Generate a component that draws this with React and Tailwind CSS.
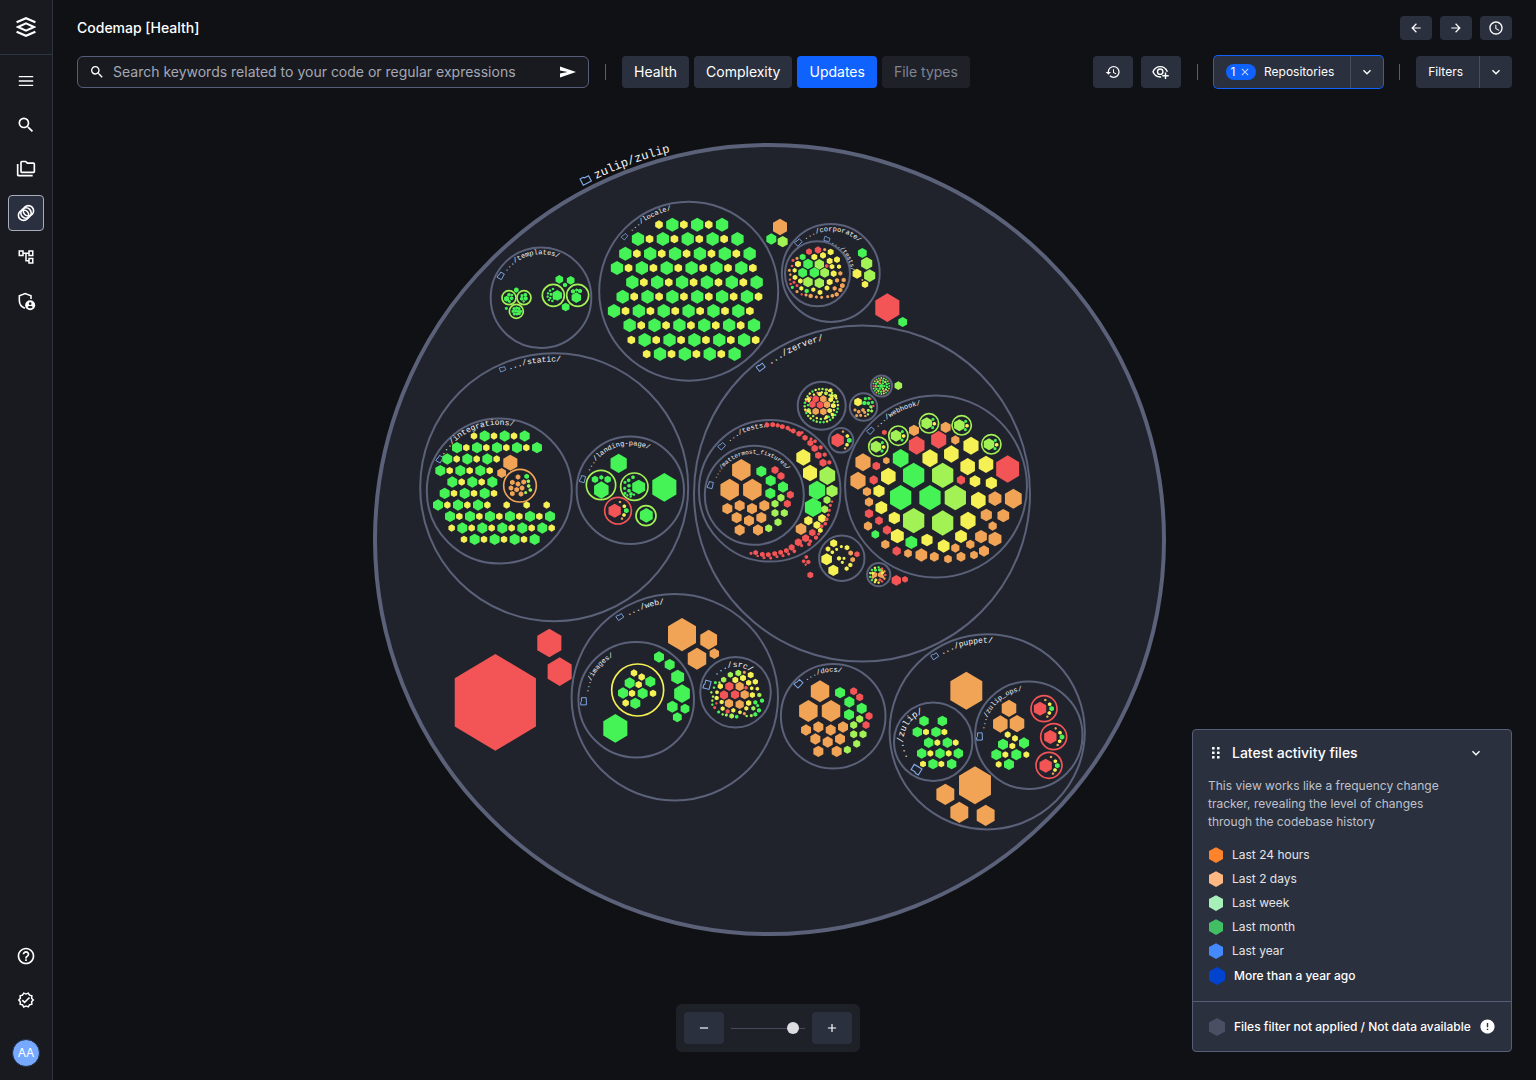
import React from 'react';
import {
  MdSearch, MdOutlineFolderCopy, MdOutlineAccountTree,
  MdHelpOutline, MdOutlineVerified, MdHistory, MdSchedule, MdError, MdArrowBack, MdArrowForward,
  MdKeyboardArrowDown, MdAdd, MdRemove, MdClose,
} from 'react-icons/md';

const COLORS = {
  g: '#45f357',
  y: '#f5f054',
  l: '#a3f255',
  o: '#f2a456',
  r: '#f35556',
  c: '#5a6179',
};

/* ---------- map geometry: clusters hold their cells at three units per pixel ---------- */

function parse(color, text) {
  return text.split(',').map((cell) => {
    const [x, y, r] = cell.trim().split(' ').map(Number);
    return { color, x, y, r };
  });
}

function cells(groups) {
  return Object.entries(groups).flatMap(([color, text]) => parse(color, text));
}

function rows(list, toYellow, toGreen, big, small) {
  return list.flatMap(([y, first, x0, count]) => {
    const out = [];
    let x = x0;
    let color = first;
    for (let i = 0; i < count; i += 1) {
      out.push({ color, x, y, r: color === 'g' ? big : small });
      x += color === 'g' ? toYellow : toGreen;
      color = color === 'g' ? 'y' : 'g';
    }
    return out;
  });
}

function ring(cx, cy, radius, size, pattern, from = 0, sweep = 360) {
  return pattern.split('').map((color, i) => {
    const a = ((from + (sweep * i) / pattern.length) * Math.PI) / 180;
    return { color, x: cx + radius * Math.cos(a), y: cy + radius * Math.sin(a), r: size };
  });
}

function redBadge(cx, cy) {
  return [
    { color: 'r', x: cx - 10, y: cy, r: 21 },
    { color: 'o', x: cx + 6, y: cy - 26, r: 4 },
    { color: 'y', x: cx + 19, y: cy - 13, r: 6 },
    { color: 'g', x: cx + 25, y: cy, r: 8 },
    { color: 'y', x: cx + 18, y: cy + 13, r: 6 },
    { color: 'o', x: cx + 12, y: cy + 24, r: 4 },
  ];
}

function limeBadge(cx, cy) {
  return [
    { color: 'l', x: cx - 7, y: cy, r: 18 },
    { color: 'g', x: cx + 12, y: cy - 12, r: 5 },
    { color: 'y', x: cx + 16, y: cy + 1, r: 6 },
    { color: 'g', x: cx + 11, y: cy + 13, r: 5 },
  ];
}

const LOCALE_ROWS = [
  [254, 'y', 537, 6], [297, 'g', 474, 9], [341, 'g', 436, 11], [384, 'g', 411, 12], [427, 'g', 457, 11],
  [470, 'g', 428, 12], [513, 'g', 402, 12], [556, 'g', 449, 11], [600, 'y', 454, 11], [642, 'y', 500, 8],
];

const INTEGRATION_ROWS = [
  [273, 'y', 192, 6], [308, 'g', 141, 9], [342, 'g', 112, 6], [377, 'g', 91, 6], [411, 'g', 127, 5],
  [445, 'g', 104, 6], [480, 'g', 84, 6], [514, 'g', 120, 11], [549, 'y', 125, 11], [583, 'y', 162, 8],
];

const FIXTURES = cells({
  o: '154 210 33,119 269 33,187 269 33,112 326 17,149 317 17,186 326 17,223 317 17,140 353 17,177 362 17,214 353 17,149 390 17,204 390 17',
  g: '214 214 17,242 242 17,241 280 17,279 261 17',
  l: '273 293 12,255 311 12,255 339 12,283 339 12,264 367 12,236 385 12',
  r: '255 210 12,273 228 12,301 284 12,292 311 12',
});

const CLUSTERS = [
  {
    at: [480, 140],
    rings: [['l', 87, 473, 21], ['l', 132, 473, 21], ['l', 109, 514, 21], ['l', 220, 466, 33], ['l', 293, 466, 33]],
    cells: [
      ...rows(LOCALE_ROWS, 34.6, 40, 21, 13),
      ...cells({
        g: '238 418 13,272 421 13,255 435 7,257 501 13,109 450 8,79 505 5,80 476 9,87 464 6,95 475 6,88 484 5,96 465 4,126 467 5,136 464 6,125 476 6,137 475 7,131 484 4,232 466 16,219 447 4,210 452 4,204 460 4,213 463 5,203 470 4,211 474 4,207 480 4,217 483 4,222 476 4,289 473 16,279 454 7,300 453 7,290 450 5,102 506 5,110 504 5,117 506 5,99 514 5,107 513 5,115 514 5,122 514 5,103 522 5,111 522 5,118 521 5',
      }),
    ],
  },
  {
    at: [770, 210],
    rings: [],
    cells: [
      ...cells({
        g: '114 162 16,98 188 15,133 188 16,98 141 10,110 243 7,67 232 5,277 129 15,4 87 17,398 336 15,286 566 5,297 565 5,283 579 7,295 580 6,307 577 5,302 590 5',
        l: '148 163 16,164 188 15,114 216 16,148 219 16,290 160 19,299 197 19,38 95 17,385 527 13,295 601 5,305 603 5,294 613 4,304 592 4',
        r: '117 125 10,144 120 11,69 151 5,66 168 4,72 217 5,60 209 4,170 168 6,62 222 4,95 253 4,81 227 5,352 293 43,302 567 3,310 588 4,137 567 11,127 583 11,150 585 11,109 573 4,109 603 5',
        y: '133 141 10,159 136 10,182 126 10,179 153 10,201 149 10,84 162 10,191 191 10,179 216 10,74 181 7,91 213 8,75 202 8,186 170 8,207 170 7,94 235 7,130 239 7,150 247 8,171 234 8,261 191 15,285 223 11,264 576 13,182 569 8,190 587 8,179 602 8,117 567 7,116 602 7,149 552 7,182 541 6,196 558 6,185 557 6,168 550 6,188 614 6,170 621 6',
        o: '164 119 5,81 145 5,58 181 5,61 194 4,211 190 7,201 211 7,221 210 7,217 227 8,194 235 7,211 240 7,200 253 7,187 257 6,173 260 5,155 262 5,139 261 5,122 258 7,108 255 5,81 245 5,30 51 25,277 210 3,255 600 5,266 605 6,279 600 6,260 617 5,272 616 5,284 607 5,286 618 4,160 567 11,171 584 11,137 604 11,160 605 11,171 539 4',
      }),
      ...ring(154, 587, 40, 4, 'yygylylylgyryoyllyly', 20),
      ...ring(154, 587, 50, 4, 'ggglgygglgylgylgylygylllyllyly', 10),
      ...ring(334, 528, 24, 3, 'glogylgoglrglogylgog', 0),
      ...ring(334, 528, 17, 4, 'gloglgogloglg', 10),
      ...ring(334, 528, 9, 4, 'glggog', 0),
      ...cells({ g: '334 528 6' }),
    ],
  },
  {
    at: [410, 345],
    rings: [['o', 330, 422, 49], ['l', 573, 420, 44], ['l', 673, 425, 41], ['l', 708, 512, 30], ['r', 624, 497, 40]],
    cells: [
      ...rows(INTEGRATION_ROWS, 28, 32, 17, 11),
      ...cells({
        y: '290 480 11,350 480 11,410 480 11',
        o: '301 353 24,275 384 15,324 396 8,307 412 8,324 417 8,341 411 8,303 429 8,320 434 8,336 429 8,307 446 8,333 447 8',
        g: '350 394 8,626 355 29,763 427 43,574 435 26,555 403 11,574 397 7,593 403 11,686 426 22,709 511 22,656 406 6,669 397 6,645 412 5,657 422 6,644 430 5,657 437 6,645 445 5,663 447 6,652 451 4,672 449 4,662 455 4',
        l: '355 409 6,356 423 6,361 435 6,347 443 5',
      }),
      ...redBadge(624, 497),
    ],
  },
  {
    at: [690, 400],
    rings: [],
    cells: [
      ...FIXTURES,
      ...redBadge(453, 121),
      ...cells({
        y: '340 172 25,360 219 25,355 362 14,396 355 13,381 375 12,391 391 8,431 430 12,414 447 8,427 457 6,440 448 5,454 440 5,471 443 8,410 478 18,430 511 17,447 475 7,462 475 5,457 487 5,470 506 7,481 495 7',
        l: '412 227 28,426 273 19,411 300 12,404 328 12',
        g: '381 271 29,369 322 29',
        o: '333 387 18,482 459 8,488 479 8',
        r: '231 75 8,248 74 8,263 76 7,277 80 8,293 84 7,310 93 8,327 101 9,345 113 9,361 129 10,374 145 11,385 166 11,399 188 12,392 142 7,404 164 7,418 187 7,375 124 6,363 117 5,300 90 5,336 98 5,426 305 4,421 316 5,418 331 5,415 345 5,410 358 6,406 371 6,395 379 6,378 413 7,386 402 5,367 398 11,347 415 12,325 427 12,305 442 10,289 452 8,272 457 8,254 461 8,235 464 8,217 463 8,197 458 8,183 460 5,361 424 6,357 433 6,335 437 5,313 454 6,296 462 5,279 467 5,261 470 5,242 474 5,222 473 5,203 468 4,349 471 6,341 484 6,355 486 7,347 494 4,361 525 10,501 463 9',
      }),
    ],
  },
  {
    at: [840, 390],
    rings: [['l', 115, 170, 29], ['l', 175, 137, 29], ['l', 267, 100, 29], ['l', 365, 106, 29], ['l', 454, 163, 29]],
    cells: [
      ...cells({
        g: '182 205 28,221 256 38,182 323 38,270 323 38,214 457 20,106 433 13',
        l: '308 256 38,346 323 38,221 392 38,308 399 38',
        y: '145 259 26,270 205 27,334 192 26,393 167 27,383 230 26,438 223 26,117 303 19,124 353 20,163 384 19,172 438 22,261 450 19,311 468 20,363 439 20,384 392 27,415 331 26,405 274 18,454 279 19',
        r: '230 166 28,296 149 27,503 237 41,133 127 8,109 228 13,101 270 14,87 371 14,117 392 13,141 420 14,170 483 14,363 270 14,169 571 16,195 568 10',
        o: '222 121 17,317 112 17,346 150 14,69 217 27,54 272 27,139 212 11,81 305 14,87 336 14,84 408 14,136 463 14,204 490 13,244 495 20,283 500 15,324 507 13,363 500 15,402 495 13,432 483 17,465 447 22,423 440 20,391 463 14,346 474 14,458 408 14,490 377 20,439 375 19,465 326 22,520 326 30,104 554 9,122 554 9,124 540 6',
      }),
      ...ring(113, 555, 16, 5, 'oryoyggy', 20),
      ...ring(113, 555, 23, 4, 'roryygglgygro', 0),
      ...limeBadge(115, 170),
      ...limeBadge(175, 137),
      ...limeBadge(267, 100),
      ...limeBadge(365, 106),
      ...limeBadge(454, 163),
    ],
  },
  {
    at: [440, 590],
    rings: [['y', 593, 300, 78]],
    cells: cells({
      r: '166 337 145,328 159 43,359 245 43,868 289 14,852 315 14,885 314 14,863 364 7,824 353 5,918 293 6,829 340 4',
      o: '726 134 50,806 149 30,771 206 33,823 191 16,899 289 14,914 314 14,867 340 14,899 343 14,913 247 5,913 371 5',
      g: '657 201 17,689 224 17,713 261 22,726 311 28,697 350 18,735 356 15,712 382 15,526 415 43,569 279 17,631 275 17,549 309 17,608 310 17,586 340 17,966 332 7,946 337 7,957 361 7,946 373 7,826 278 5,822 293 4,817 344 4,890 380 6,953 347 5,836 366 5',
      y: '582 249 11,605 261 11,596 284 11,576 310 11,639 310 11,557 339 11,886 270 10,909 264 10,932 255 10,926 278 9,946 275 9,841 289 9,937 315 9,926 339 9,830 324 7,831 307 6,845 336 7,848 356 7,880 361 7,900 367 6,919 355 7,935 295 6,952 296 6',
      l: '851 269 9,871 254 9,895 249 10,875 378 8,859 375 5,848 373 4,940 355 7,958 315 7,814 307 4,819 320 4,838 278 4,920 378 4,934 377 5,817 332 4',
    }),
  },
  { at: [768.7, 621.3], rings: [], cells: FIXTURES },
  {
    at: [770, 630],
    rings: [['r', 822, 236, 39], ['r', 851, 320, 39], ['r', 837, 406, 39]],
    cells: [
      ...cells({
        o: '589 182 57,615 466 57,526 493 32,568 547 32,647 556 32,717 235 26,691 282 26,741 281 26',
        g: '462 273 16,517 273 16,442 306 16,498 306 16,476 338 16,532 338 16,455 370 16,510 370 16,565 370 16,489 402 16,545 402 16,762 339 17,699 343 17,679 374 17,739 374 17,717 403 17',
        y: '468 306 10,523 306 10,502 338 10,557 338 10,481 370 10,536 370 10,459 402 10,514 402 10,713 314 10,735 325 10,727 348 10,706 374 10,769 374 10,686 403 10',
      }),
      ...redBadge(820, 236),
      ...redBadge(851, 321),
      ...redBadge(837, 407),
    ],
  },
];

/* name, centre x, centre y, radius */
const FOLDERS = [
  ['locale', 688.7, 291.2, 89.5],
  ['templates', 541, 297.7, 50.3],
  ['corporate', 830.8, 273, 48.9],
  ['corporate-tests', 817.5, 273.7, 32.5],
  ['zerver', 862, 493.5, 168],
  ['static', 554.2, 487.2, 134],
  ['integrations', 499.3, 491, 72.5],
  ['landing', 630.3, 490.3, 53.7],
  ['zerver-tests', 769.7, 490.8, 70.8],
  ['fixtures', 754.3, 495.3, 49.5],
  ['webhook', 936, 486.5, 91],
  ['actions', 821.7, 405.7, 24],
  ['lib', 863.5, 407, 13.7],
  ['views', 881.5, 386, 10.5],
  ['tornado', 841, 440.3, 12.3],
  ['data', 841.8, 558.2, 22.7],
  ['management', 878.7, 574.7, 11.6],
  ['web', 674.8, 697.3, 103.2],
  ['images', 636.2, 699.7, 57.8],
  ['src', 735.5, 692.2, 35.3],
  ['docs', 833.2, 716.2, 52.3],
  ['puppet', 987.2, 731.8, 97.6],
  ['puppet-zulip', 933.2, 741.7, 39.2],
  ['zulip-ops', 1028.8, 735.3, 53.7],
];

/* text, arc centre, start of the baseline, type size, folder glyph position, glyph size */
const LABELS = [
  ['zulip/zulip', 769.5, 540, 596, 179, 12, 585.7, 180, 10],
  ['.../locale/', 688.7, 291.2, 631, 232, 7, 624.5, 236.5, 6],
  ['.../templates/', 541, 297.7, 506, 272, 7, 500.7, 275.7, 7],
  ['.../corporate/', 830.8, 273, 805, 240, 7, 798.3, 242.3, 7],
  ['.../tests/', 817.5, 273.7, 831, 243, 6, 827, 239, 6],
  ['.../zerver/', 862, 493.5, 770, 365, 9, 760.7, 367, 8],
  ['.../static/', 554.2, 487.2, 509, 370, 8, 502.5, 369, 6],
  ['.../integrations/', 499.3, 491, 443, 456, 8, 439.5, 459, 7],
  ['.../landing-page/', 630.3, 490.3, 589, 472, 7, 582.5, 479, 7],
  ['.../tests/', 769.7, 490.8, 729, 442, 7, 721.7, 446, 7],
  ['.../mattermost_fixtures/', 754.3, 495.3, 716, 479, 6, 710.3, 485, 7],
  ['.../webhook/', 936, 486.5, 877, 428, 7, 870.5, 430.5, 7],
  ['.../web/', 674.8, 697.3, 628, 616, 8, 619.8, 616.8, 7],
  ['.../images/', 636.2, 699.7, 588, 693, 7, 583.5, 701.3, 8],
  ['.../src/', 735.5, 692.2, 716, 676, 8, 707, 684.7, 9],
  ['.../docs/', 833.2, 716.2, 806, 681, 7, 798.5, 683.5, 8],
  ['.../puppet/', 987.2, 731.8, 942, 655, 8, 934.7, 656, 7],
  ['.../zulip/', 933.2, 741.7, 908, 758, 9, 916.3, 769.7, 10],
  ['.../zulip_ops/', 1028.8, 735.3, 984, 730, 7, 979.5, 736.5, 8],
];

function hexPoints(x, y, r) {
  const w = r * (r < 25 ? 0.88 : 0.84);
  const h = r / 2;
  return [[x, y - r], [x + w, y - h], [x + w, y + h], [x, y + r], [x - w, y + h], [x - w, y - h]]
    .map((p) => p.join(','))
    .join(' ');
}

function CurvedLabel({ id, label }) {
  const [text, cx, cy, sx, sy, size, ix, iy, iconSize] = label;
  const r = Math.hypot(sx - cx, sy - cy);
  const tilt = (Math.atan2(iy - cy, ix - cx) * 180) / Math.PI + 90;
  const k = iconSize / 20;
  return (
    <g>
      <path id={id} fill="none" d={`M${sx} ${sy}A${r} ${r} 0 0 1 ${cx + (cx - sx)} ${cy + (cy - sy)}`} />
      <text fill="#f4f4f6" fontSize={size} fontFamily='"Liberation Mono", monospace'>
        <textPath href={`#${id}`}>{text}</textPath>
      </text>
      <path
        transform={`translate(${ix} ${iy}) rotate(${tilt}) scale(${k})`}
        d="M-9 -7H-2L0 -5H9V7H-9Z"
        fill="none"
        stroke="#7fa8e6"
        strokeWidth="2.4"
      />
    </g>
  );
}

function CodeMap() {
  return (
    <svg viewBox="53 104 1483 976" className="absolute inset-0 size-full" role="img" aria-label="Code map of zulip/zulip">
      <circle cx="769.5" cy="539.5" r="394.5" fill="#20232c" stroke={COLORS.c} strokeWidth="4" />
      {FOLDERS.map(([name, cx, cy, r]) => (
        <circle key={name} cx={cx} cy={cy} r={r} fill="none" stroke={COLORS.c} strokeWidth="2" />
      ))}
      {LABELS.map((label, i) => (
        <CurvedLabel key={i} id={`arc-${i}`} label={label} />
      ))}
      {CLUSTERS.map((cluster, i) => (
        <g key={i} transform={`translate(${cluster.at[0]} ${cluster.at[1]}) scale(0.33333)`}>
          {cluster.rings.map(([color, x, y, r], j) => (
            <circle key={j} cx={x} cy={y} r={r} fill="none" stroke={COLORS[color]} strokeWidth="5" />
          ))}
          {cluster.cells.map((c, j) => (
            <polygon key={j} points={hexPoints(c.x, c.y, c.r)} fill={COLORS[c.color]} />
          ))}
        </g>
      ))}
    </svg>
  );
}

/* ---------- icons ---------- */

function Logo() {
  return (
    <svg viewBox="0 0 20 20" className="size-5" fill="none" stroke="white" strokeWidth="2.1">
      <path d="M0.6 5.3L10 1.2L19.4 5.3" />
      <path d="M0.6 14.7L10 18.8L19.4 14.7" />
      <path d="M2 10L10 6.4L18 10L10 13.6Z" />
    </svg>
  );
}

function MenuIcon() {
  return (
    <svg viewBox="0 0 16 12" className="h-3 w-4" fill="none" stroke="white" strokeWidth="1.3">
      <path d="M0.8 1.7H15.2M0.8 6H15.2M0.8 10.3H15.2" />
    </svg>
  );
}

function ShieldIcon() {
  return (
    <svg viewBox="0 0 24 24" className="size-5" fill="none" stroke="white" strokeWidth="1.9">
      <path d="M18 9.6V5.7L11 3L4 5.7V11C4 15.4 6.8 19.2 10.6 20.6" />
      <circle cx="17" cy="17" r="6" fill="white" stroke="none" />
      <circle cx="17" cy="15.2" r="1.6" fill="#191a20" stroke="none" />
      <path d="M13.8 19.2C14.8 17.4 19.2 17.4 20.2 19.2C18.6 21.2 15.4 21.2 13.8 19.2Z" fill="#191a20" stroke="none" />
    </svg>
  );
}

function CirclesIcon() {
  return (
    <svg viewBox="0 0 18 18" className="size-[18px]" fill="none" stroke="white" strokeWidth="1.6">
      <circle cx="6.6" cy="11.2" r="5.2" />
      <circle cx="9" cy="9" r="5.2" />
      <circle cx="11.4" cy="6.8" r="5.2" />
    </svg>
  );
}

function SendIcon() {
  return (
    <svg viewBox="0 0 16 12" className="h-3 w-4" fill="white">
      <path d="M0 0.6L16 6L0 11.4V7.4L7.5 6L0 4.6Z" />
    </svg>
  );
}

function EyePlusIcon() {
  return (
    <svg viewBox="0 0 18 16" className="h-4 w-[18px]" fill="none" stroke="white" strokeWidth="1.4">
      <path d="M9.2 12.9C5.4 13.2 2.3 11 1 7.7C2.4 4.4 5 2.6 8.2 2.6C11.4 2.6 14 4.4 15.4 7.7" />
      <circle cx="8.2" cy="7.7" r="2.7" />
      <path d="M13.5 8.6V15M10.3 11.8H16.7" />
    </svg>
  );
}

function DragIcon() {
  return (
    <svg viewBox="0 0 8 12" className="h-3 w-2" fill="white">
      {[0, 4.5, 9].map((y) => (
        <g key={y}>
          <rect x="0" y={y} width="2.6" height="2.6" rx="0.6" />
          <rect x="5" y={y} width="2.6" height="2.6" rx="0.6" />
        </g>
      ))}
    </svg>
  );
}

function Hexagon({ color, large }) {
  return (
    <svg viewBox="0 0 16 18" className={large ? 'h-[18px] w-4 shrink-0' : 'h-4 w-[14px] shrink-0'}>
      <polygon points="8,0 16,4.5 16,13.5 8,18 0,13.5 0,4.5" fill={color} />
    </svg>
  );
}

/* ---------- page parts ---------- */

function NavButton({ label, active, children }) {
  const look = active ? 'border-[#a9adba] bg-[#2b3040]' : 'border-transparent';
  return (
    <button type="button" aria-label={label} className={`flex size-9 items-center justify-center rounded border ${look}`}>
      {children}
    </button>
  );
}

function Sidebar() {
  return (
    <nav className="flex w-[53px] shrink-0 flex-col items-center border-r border-[#2d3444] bg-[#191a20]">
      <a href="#home" aria-label="Home" className="flex h-[55px] w-full items-center justify-center border-b border-[#2d3444]">
        <Logo />
      </a>
      <div className="flex flex-col gap-2 pt-2">
        <NavButton label="Menu"><MenuIcon /></NavButton>
        <NavButton label="Search"><MdSearch size={20} /></NavButton>
        <NavButton label="Projects"><MdOutlineFolderCopy size={20} /></NavButton>
        <NavButton label="Codemap" active><CirclesIcon /></NavButton>
        <NavButton label="Dependencies"><MdOutlineAccountTree size={18} /></NavButton>
        <NavButton label="Security"><ShieldIcon /></NavButton>
      </div>
      <div className="mt-auto flex flex-col gap-2">
        <NavButton label="Help"><MdHelpOutline size={20} /></NavButton>
        <NavButton label="Status"><MdOutlineVerified size={18} /></NavButton>
      </div>
      <button type="button" className="mt-[21px] mb-[13px] flex size-7 items-center justify-center rounded-full border border-[#202c42] bg-[#76a9ff] text-xs">
        AA
      </button>
    </nav>
  );
}

function Separator() {
  return <span className="h-4 w-px shrink-0 bg-[#565d78]" />;
}

function SmallButton({ label, children }) {
  return (
    <button type="button" aria-label={label} className="flex h-6 w-8 items-center justify-center rounded bg-[#2b303e]">
      {children}
    </button>
  );
}

function ToolButton({ label, children }) {
  return (
    <button type="button" aria-label={label} className="flex h-8 w-10 items-center justify-center rounded bg-[#2b303e]">
      {children}
    </button>
  );
}

const TABS = [
  ['Health', 'bg-[#2b303e]'],
  ['Complexity', 'bg-[#2b303e]'],
  ['Updates', 'bg-[#0f62fe]'],
  ['File types', 'bg-[#1f2129] text-[#7f8492]'],
];

function Header() {
  return (
    <header className="flex h-[104px] shrink-0 flex-col gap-4 px-6 pt-4">
      <div className="flex h-6 items-center justify-between">
        <h1 className="text-sm font-medium">Codemap [Health]</h1>
        <div className="flex gap-2">
          <SmallButton label="Back"><MdArrowBack size={14} /></SmallButton>
          <SmallButton label="Forward"><MdArrowForward size={14} /></SmallButton>
          <SmallButton label="Recent"><MdSchedule size={16} /></SmallButton>
        </div>
      </div>
      <div className="flex h-8 items-center gap-4">
        <form className="flex h-8 w-128 items-center rounded-md border border-[#565d78] bg-[#191a20] pr-3 pl-[11px]">
          <MdSearch size={16} className="shrink-0" />
          <input
            type="text"
            aria-label="Search"
            placeholder="Search keywords related to your code or regular expressions"
            className="ml-2 min-w-0 flex-1 bg-transparent text-sm outline-none placeholder:text-[#a4a8b5]"
          />
          <button type="button" aria-label="Send"><SendIcon /></button>
        </form>
        <Separator />
        <div className="flex gap-[5px]">
          {TABS.map(([name, look]) => (
            <button key={name} type="button" className={`h-8 rounded px-3 text-sm whitespace-nowrap ${look}`}>
              {name}
            </button>
          ))}
        </div>
        <div className="ml-auto flex items-center gap-4">
          <div className="flex gap-2">
            <ToolButton label="History"><MdHistory size={16} /></ToolButton>
            <ToolButton label="Add to watch list"><EyePlusIcon /></ToolButton>
          </div>
          <Separator />
          <div className="flex h-8 rounded bg-[#2b303e] text-xs ring-1 ring-[#0f62fe]">
            <button type="button" className="flex items-center gap-2 pr-4 pl-3">
              <span className="flex h-4 w-[30px] items-center justify-center gap-1 rounded-full bg-[#0f62fe]">
                1 <MdClose size={12} className="text-[#c8d8fa]" />
              </span>
              Repositories
            </button>
            <button type="button" aria-label="Choose repositories" className="flex w-[33px] items-center justify-center border-l border-[#484e60]">
              <MdKeyboardArrowDown size={16} />
            </button>
          </div>
          <Separator />
          <div className="flex h-8 rounded bg-[#2b303e] text-xs">
            <button type="button" className="pr-4 pl-3">Filters</button>
            <button type="button" aria-label="Choose filters" className="flex w-[33px] items-center justify-center border-l border-[#484e60]">
              <MdKeyboardArrowDown size={16} />
            </button>
          </div>
        </div>
      </div>
    </header>
  );
}

function ZoomBar() {
  return (
    <div className="fixed bottom-7 left-1/2 flex h-12 w-[184px] -translate-x-1/2 items-center justify-between rounded-md bg-[#1f2129] p-2">
      <ToolButton label="Zoom out"><MdRemove size={14} /></ToolButton>
      <input
        type="range"
        aria-label="Zoom"
        min="0"
        max="100"
        defaultValue="90"
        className="h-px w-[74px] appearance-none bg-[#464b5c] [&::-webkit-slider-thumb]:size-3 [&::-webkit-slider-thumb]:appearance-none [&::-webkit-slider-thumb]:rounded-full [&::-webkit-slider-thumb]:bg-[#dcdde0]"
      />
      <ToolButton label="Zoom in"><MdAdd size={14} /></ToolButton>
    </div>
  );
}

const LEGEND = [
  ['Last 24 hours', '#ff832b'],
  ['Last 2 days', '#ffb784'],
  ['Last week', '#a7f0ba'],
  ['Last month', '#42be65'],
  ['Last year', '#4589ff'],
];

function ActivityPanel() {
  return (
    <aside className="absolute right-6 bottom-7 w-80 rounded border border-[#565d78] bg-[#2b303e]">
      <div className="px-[15px] pt-[11px] pb-3">
        <div className="flex h-6 items-center">
          <span className="flex w-4 justify-center"><DragIcon /></span>
          <h2 className="ml-2 text-sm font-medium">Latest activity files</h2>
          <button type="button" aria-label="Collapse" className="mr-3 ml-auto"><MdKeyboardArrowDown size={16} /></button>
        </div>
        <p className="mt-3 w-60 text-xs leading-[18px] text-[#bfc2cc]">
          This view works like a frequency change tracker, revealing the level of changes through the codebase history
        </p>
        <ul className="mt-3 text-xs">
          {LEGEND.map(([name, color]) => (
            <li key={name} className="flex h-6 items-center text-[#e2e3e8]">
              <span className="flex w-4 justify-center"><Hexagon color={color} /></span>
              <span className="ml-2">{name}</span>
            </li>
          ))}
          <li className="flex h-[26px] items-center font-medium">
            <span className="flex w-[18px] justify-center"><Hexagon color="#0043ce" large /></span>
            <span className="ml-2">More than a year ago</span>
          </li>
        </ul>
      </div>
      <div className="flex h-[50px] items-center border-t border-[#565d78] px-[15px] text-xs font-medium">
        <span className="flex w-[18px] justify-center"><Hexagon color="#4a4f63" large /></span>
        <span className="ml-2 whitespace-nowrap">Files filter not applied / Not data available</span>
        <MdError size={17} className="ml-auto" />
      </div>
    </aside>
  );
}

export default function App() {
  return (
    <div className="flex h-screen bg-[#101114] font-['Inter',sans-serif] text-white">
      <Sidebar />
      <main className="flex min-w-0 flex-1 flex-col">
        <Header />
        <section className="relative flex-1">
          <CodeMap />
          <ActivityPanel />
          <ZoomBar />
        </section>
      </main>
    </div>
  );
}
